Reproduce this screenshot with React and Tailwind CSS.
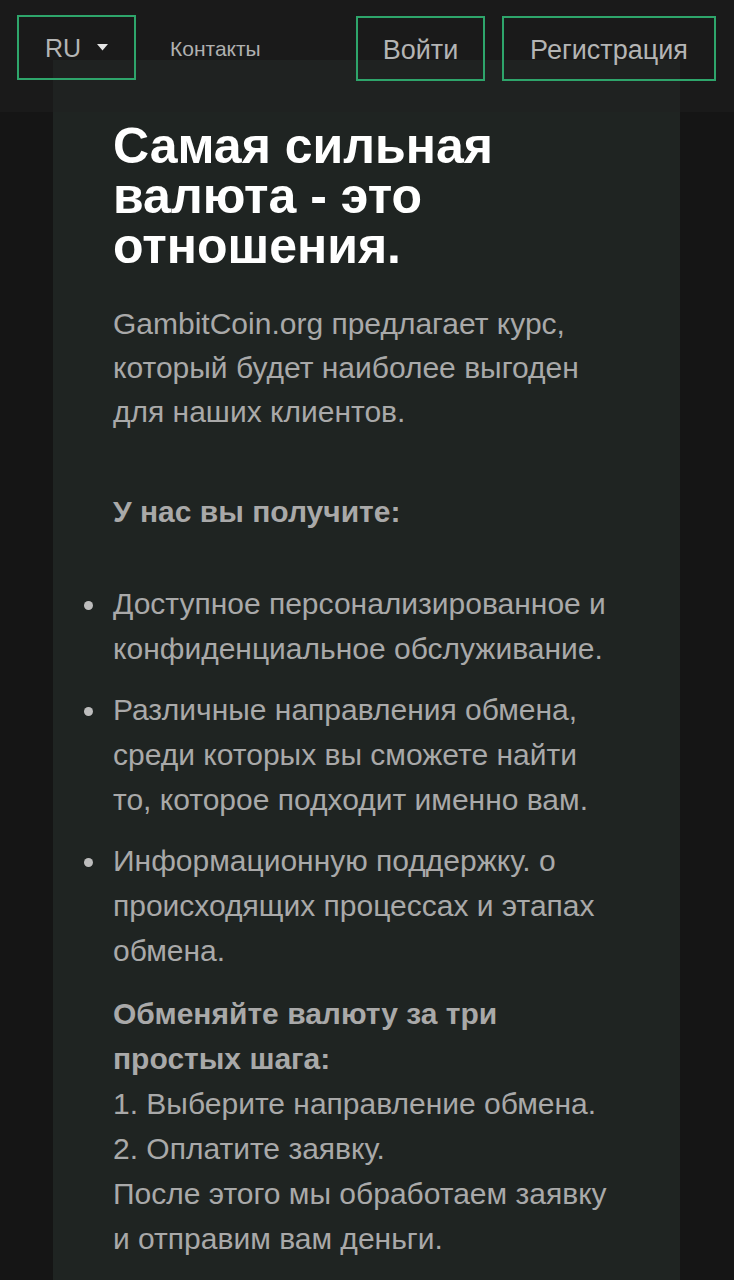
import React from "react";

const Header = () => {
  return (
    <div className="absolute top-0 left-0 right-0 h-[112px] bg-[#1f1f1f]/50">
      <div className="flex items-start pt-[15px] pl-[17px] pr-[18px]">
        <button className="w-[119px] h-[65px] border-2 border-[#2ea56b] flex items-center pl-[26px] pt-[3px] gap-[16px] text-[25px] text-[#b4b4b4]">
          RU
          <svg width="11" height="7" viewBox="0 0 11 7" className="mb-[4px]">
            <polygon points="0,0 11,0 5.5,6.5" fill="#e6e6e6" />
          </svg>
        </button>
        <a className="ml-[34px] h-[65px] pt-[3px] flex items-center text-[21px] text-[#b0b0b0]">
          Контакты
        </a>
        <div className="ml-auto flex gap-[17px] pt-px">
          <button className="w-[129px] h-[65px] pt-[3px] border-2 border-[#2ea56b] flex items-center justify-center text-[27px] text-[#b4b4b4]">
            Войти
          </button>
          <button className="w-[214px] h-[65px] pt-[3px] border-2 border-[#2ea56b] flex items-center justify-center text-[27px] text-[#b4b4b4]">
            Регистрация
          </button>
        </div>
      </div>
    </div>
  );
};

const items = [
  "Доступное персонализированное и конфиденциальное обслуживание.",
  "Различные направления обмена, среди которых вы сможете найти то, которое подходит именно вам.",
  "Информационную поддержку. о происходящих процессах и этапах обмена.",
];

const App = () => {
  return (
    <div
      className="relative min-h-screen bg-[#151515] overflow-hidden"
      style={{ fontFamily: '"Liberation Sans", Arial, sans-serif' }}
    >
      <div className="ml-[53px] w-[627px] mt-[60px] bg-[#1f2422] pt-[61px] pl-[60px] pr-[59px] pb-10">
        <h1 className="text-[50px] leading-[50px] font-bold text-white">
          Самая сильная валюта - это отношения.
        </h1>
        <p className="mt-[31px] text-[30px] leading-[44px] text-[#a9a9a9]">
          GambitCoin.org предлагает курс, который будет наиболее выгоден для
          наших клиентов.
        </p>
        <p className="mt-[56px] text-[30px] leading-[44px] font-bold text-[#a9a9a9]">
          У нас вы получите:
        </p>
        <ul className="mt-[47px] -ml-[30px] text-[30px] leading-[45px] text-[#a9a9a9] flex flex-col gap-[16px]">
          {items.map((t) => (
            <li key={t} className="flex">
              <span className="w-[30px] h-[45px] shrink-0 flex items-center pt-[4px]">
                <span className="ml-px w-[9px] h-[9px] rounded-full bg-[#bdbdbd]" />
              </span>
              <span>{t}</span>
            </li>
          ))}
        </ul>
        <div className="mt-[18px] text-[30px] leading-[45px] text-[#a9a9a9]">
          <p className="font-bold">Обменяйте валюту за три простых шага:</p>
          <p>1. Выберите направление обмена.</p>
          <p>2. Оплатите заявку.</p>
          <p>После этого мы обработаем заявку и отправим вам деньги.</p>
        </div>
      </div>
      <Header />
    </div>
  );
};

export default App;
